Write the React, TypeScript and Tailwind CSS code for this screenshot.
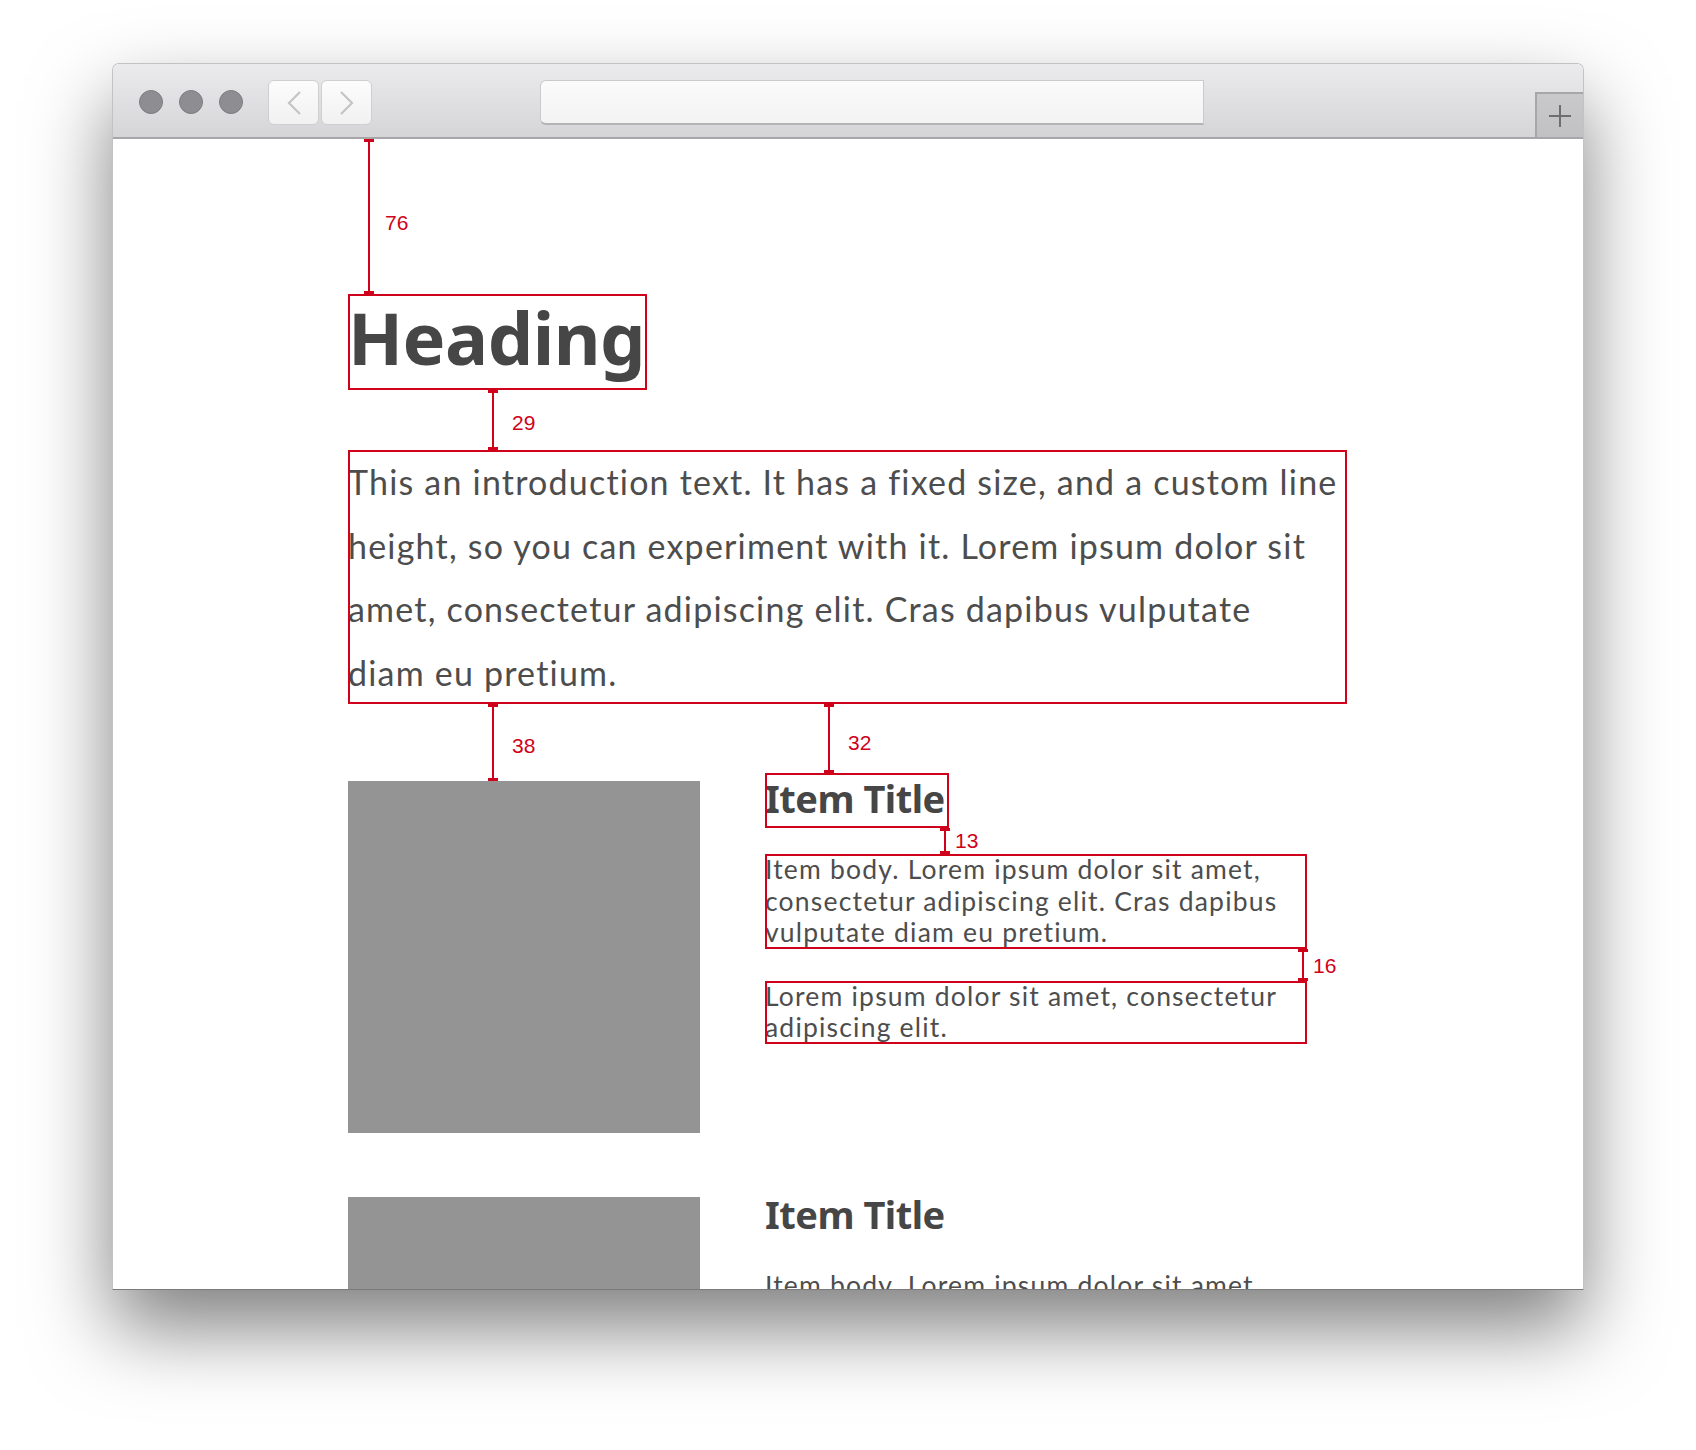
import React from "react";

const RED = "bg-[#d0021b]";

function Gap({
  pos,
  label,
  labelPos,
}: {
  pos: string;
  label: string;
  labelPos: string;
}) {
  return (
    <div className={`pointer-events-none absolute bottom-full -ml-[5px] w-[10px] ${pos}`}>
      <div className={`absolute bottom-0 left-[4px] top-0 w-[2px] ${RED}`} />
      <div className={`absolute left-0 top-0 h-[3px] w-[10px] ${RED}`} />
      <div className={`absolute bottom-0 left-0 h-[3px] w-[10px] ${RED}`} />
      <span
        className={`absolute whitespace-nowrap font-['Liberation_Sans',Arial,sans-serif] text-[21px] font-normal leading-none tracking-normal text-[#d0021b] ${labelPos}`}
      >
        {label}
      </span>
    </div>
  );
}

function TrafficLight() {
  return <div className="h-[24px] w-[24px] rounded-full border border-[#7c7b80] bg-[#8e8d92]" />;
}

function Toolbar() {
  return (
    <div className="relative flex h-[75px] shrink-0 items-start border-b-2 border-[#a7a6a9] bg-gradient-to-b from-[#ebeaed] to-[#d5d4d7]">
      <div className="mt-[26px] ml-[26px] flex gap-[16px]">
        <TrafficLight />
        <TrafficLight />
        <TrafficLight />
      </div>
      <div className="mt-[16px] ml-[25px] flex gap-[2px]">
        <button className="flex h-[45px] w-[51px] items-center justify-center rounded-[6px] border border-[#cfcfd1] bg-gradient-to-b from-[#fcfcfc] to-[#f1f1f2]">
          <svg width="16" height="24" viewBox="0 0 16 24" fill="none">
            <path d="M14 1 L3 12 L14 23" stroke="#c4c4c6" strokeWidth="2.2" />
          </svg>
        </button>
        <button className="flex h-[45px] w-[51px] items-center justify-center rounded-[6px] border border-[#cfcfd1] bg-gradient-to-b from-[#fcfcfc] to-[#f1f1f2]">
          <svg width="16" height="24" viewBox="0 0 16 24" fill="none">
            <path d="M2 1 L13 12 L2 23" stroke="#c4c4c6" strokeWidth="2.2" />
          </svg>
        </button>
      </div>
      <div className="mt-[16px] ml-[168px] h-[45px] w-[664px] rounded-l-[6px] border border-b-2 border-[#cacacc] border-b-[#b4b4b6] bg-gradient-to-b from-[#fbfbfb] to-[#f3f3f3]" />
      <div className="ml-auto mt-[28px] flex h-[45px] w-[48px] items-center justify-center border-l-2 border-t-2 border-[#a7a6a9] bg-gradient-to-b from-[#c9c8cb] to-[#c1c0c3]">
        <svg width="24" height="24" viewBox="0 0 24 24">
          <path d="M12 1 V23 M1 12 H23" stroke="#6e6e70" strokeWidth="2" />
        </svg>
      </div>
    </div>
  );
}

function Item({ first }: { first?: boolean }) {
  return (
    <div className={`flex gap-[65px] ${first ? "mt-[69px]" : "mt-[56px]"}`}>
      <div className="relative mt-[8px] h-[352px] w-[352px] shrink-0 bg-[#949494]">
        {first && <Gap pos="left-[145px] h-[77px]" label="38" labelPos="left-[24px] top-[31px]" />}
      </div>
      <div className="w-[542px]">
        <h2
          className={`relative w-[184px] whitespace-nowrap pb-[5px] font-['Noto_Sans',sans-serif] text-[38px] font-bold leading-[50px] tracking-[-0.5px] text-[#464646] ${
            first ? "outline-2 outline-offset-[-2px] outline-[#d0021b]" : ""
          }`}
        >
          Item Title
          {first && <Gap pos="left-[64px] h-[69px]" label="32" labelPos="left-[24px] top-[28px]" />}
        </h2>
        <p
          className={`relative mt-[26px] font-['Lato',sans-serif] text-[26.5px] leading-[31.5px] tracking-[1.2px] text-[#4d4d4d] ${
            first ? "outline-2 outline-offset-[-2px] outline-[#d0021b]" : ""
          }`}
        >
          Item body. Lorem ipsum dolor sit amet, consectetur adipiscing elit. Cras dapibus vulputate diam eu
          pretium.
          {first && <Gap pos="left-[180px] h-[26px]" label="13" labelPos="left-[15px] top-[2px]" />}
        </p>
        <p
          className={`relative mt-[32px] font-['Lato',sans-serif] text-[26.5px] leading-[31.5px] tracking-[1.2px] text-[#4d4d4d] ${
            first ? "outline-2 outline-offset-[-2px] outline-[#d0021b]" : ""
          }`}
        >
          Lorem ipsum dolor sit amet, consectetur adipiscing elit.
          {first && <Gap pos="left-[538px] h-[32px]" label="16" labelPos="left-[15px] top-[6px]" />}
        </p>
      </div>
    </div>
  );
}

export default function App() {
  return (
    <div className="min-h-[1450px] bg-white pl-[112px] pt-[63px]">
      <div className="flex h-[1227px] w-[1472px] flex-col overflow-hidden rounded-t-[7px] border border-[#c2c1c4] border-b-[#7a7a7a] bg-white shadow-[0_38px_80px_rgba(0,0,0,0.5)]">
        <Toolbar />
        <div className="flex-1 overflow-hidden pl-[235px] pt-[155px]">
          <h1 className="relative w-[299px] pb-[10px] font-['Noto_Sans',sans-serif] text-[72px] font-bold leading-[86px] tracking-[-0.5px] text-[#464646] outline-2 outline-offset-[-2px] outline-[#d0021b]">
            Heading
            <Gap pos="left-[21px] h-[155px]" label="76" labelPos="left-[21px] top-[73px]" />
          </h1>
          <p className="relative mt-[60px] w-[999px] font-['Lato',sans-serif] text-[34px] leading-[63.5px] tracking-[1.2px] text-[#4d4d4d] outline-2 outline-offset-[-2px] outline-[#d0021b]">
            This an introduction text. It has a fixed size, and a custom line height, so you can experiment with
            it. Lorem ipsum dolor sit amet, consectetur adipiscing elit. Cras dapibus vulputate
            <br />
            diam eu pretium.
            <Gap pos="left-[145px] h-[60px]" label="29" labelPos="left-[24px] top-[22px]" />
          </p>
          <Item first />
          <Item />
        </div>
      </div>
    </div>
  );
}
